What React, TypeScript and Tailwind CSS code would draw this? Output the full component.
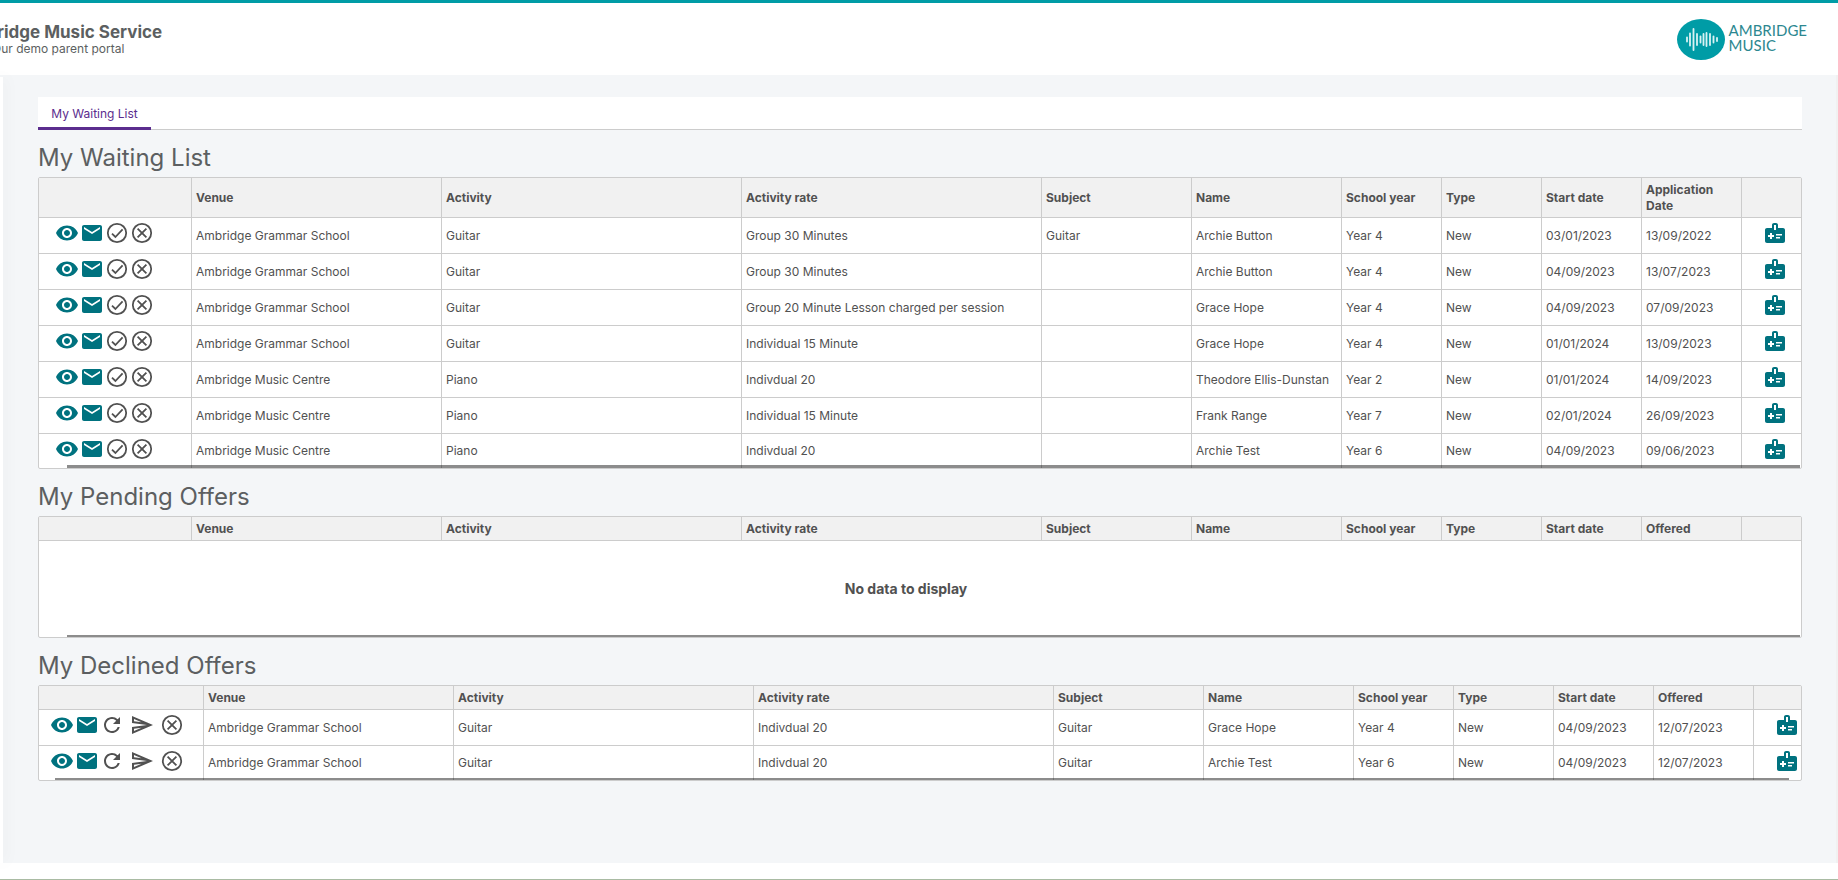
import type { ReactNode } from "react";
import { MdEmail, MdMedicalInformation, MdOutlineSend, MdRefresh, MdVisibility } from "react-icons/md";

type Entry = {
  venue: string;
  activity: string;
  rate: string;
  subject?: string;
  name: string;
  year: string;
  start: string;
  date: string;
};

const waiting: Entry[] = [
  { venue: "Ambridge Grammar School", activity: "Guitar", rate: "Group 30 Minutes", subject: "Guitar", name: "Archie Button", year: "Year 4", start: "03/01/2023", date: "13/09/2022" },
  { venue: "Ambridge Grammar School", activity: "Guitar", rate: "Group 30 Minutes", name: "Archie Button", year: "Year 4", start: "04/09/2023", date: "13/07/2023" },
  { venue: "Ambridge Grammar School", activity: "Guitar", rate: "Group 20 Minute Lesson charged per session", name: "Grace Hope", year: "Year 4", start: "04/09/2023", date: "07/09/2023" },
  { venue: "Ambridge Grammar School", activity: "Guitar", rate: "Individual 15 Minute", name: "Grace Hope", year: "Year 4", start: "01/01/2024", date: "13/09/2023" },
  { venue: "Ambridge Music Centre", activity: "Piano", rate: "Indivdual 20", name: "Theodore Ellis-Dunstan", year: "Year 2", start: "01/01/2024", date: "14/09/2023" },
  { venue: "Ambridge Music Centre", activity: "Piano", rate: "Individual 15 Minute", name: "Frank Range", year: "Year 7", start: "02/01/2024", date: "26/09/2023" },
  { venue: "Ambridge Music Centre", activity: "Piano", rate: "Indivdual 20", name: "Archie Test", year: "Year 6", start: "04/09/2023", date: "09/06/2023" },
];

const declined: Entry[] = [
  { venue: "Ambridge Grammar School", activity: "Guitar", rate: "Indivdual 20", subject: "Guitar", name: "Grace Hope", year: "Year 4", start: "04/09/2023", date: "12/07/2023" },
  { venue: "Ambridge Grammar School", activity: "Guitar", rate: "Indivdual 20", subject: "Guitar", name: "Archie Test", year: "Year 6", start: "04/09/2023", date: "12/07/2023" },
];

const teal = "text-[#00727f]";

// round outline icon, the glyph inside comes in as a path
function CircleIcon({ d }: { d: string }) {
  return (
    <svg width="24" height="24" viewBox="0 0 24 24" fill="none" stroke="currentColor" strokeWidth="1.8" aria-hidden="true">
      <circle cx="12" cy="12" r="9.2" />
      <path d={d} />
    </svg>
  );
}

const checkPath = "M7 12.6 10.4 16 17.6 8.4";
const crossPath = "M7.6 7.6 16.4 16.4M16.4 7.6 7.6 16.4";

function IconButton({ label, className, children }: { label: string; className?: string; children: ReactNode }) {
  return (
    <button type="button" aria-label={label} className={`block size-6 shrink-0 cursor-pointer ${className || ""}`}>
      {children}
    </button>
  );
}

function WaitingActions() {
  return (
    <div className="flex gap-px pl-4">
      <IconButton label="View" className={teal}><MdVisibility size={24} /></IconButton>
      <IconButton label="Email" className={teal}><MdEmail size={24} /></IconButton>
      <IconButton label="Accept"><CircleIcon d={checkPath} /></IconButton>
      <IconButton label="Withdraw"><CircleIcon d={crossPath} /></IconButton>
    </div>
  );
}

function DeclinedActions() {
  return (
    <div className="flex gap-1.5 pl-[11px]">
      <div className="flex gap-px">
        <IconButton label="View" className={teal}><MdVisibility size={24} /></IconButton>
        <IconButton label="Email" className={teal}><MdEmail size={24} /></IconButton>
        <IconButton label="Reinstate"><MdRefresh size={24} /></IconButton>
      </div>
      <IconButton label="Send"><MdOutlineSend size={24} /></IconButton>
      <IconButton label="Remove"><CircleIcon d={crossPath} /></IconButton>
    </div>
  );
}

type GridProps = {
  title: string;
  dateLabel: string;
  rows: Entry[];
  wide?: boolean;
  actions?: ReactNode;
  bar: string;
};

function OfferGrid({ title, dateLabel, rows, wide, actions, bar }: GridProps) {
  const labels = ["", "Venue", "Activity", "Activity rate", "Subject", "Name", "School year", "Type", "Start date", dateLabel, ""];
  const th = "border-b border-l border-[#ccc] px-1 pt-1 pb-[3px] text-left leading-4 font-bold first:border-l-0";
  const td = "border-b border-l border-[#ccc] px-1 whitespace-nowrap first:border-l-0 group-last:border-b-0";
  const iconCell = "border-b border-[#ccc] pt-[3px] align-top group-last:border-b-0";

  return (
    <section>
      <h2 className="pt-[11px] pb-[3px] text-2xl leading-[33px] text-[#5c5f61]">{title}</h2>
      <div className="relative overflow-hidden rounded-xs border border-[#ccc] bg-white">
        <table className="w-full table-fixed border-separate border-spacing-0">
          <colgroup>
            <col className={wide ? "w-[164px]" : "w-[152px]"} />
            <col className="w-[250px]" />
            <col className="w-[300px]" />
            <col className="w-[300px]" />
            <col className="w-[150px]" />
            <col className="w-[150px]" />
            <col className="w-[100px]" />
            <col className="w-[100px]" />
            <col className="w-[100px]" />
            <col className="w-[100px]" />
            <col />
          </colgroup>
          <thead className="bg-[#f1f1f1]">
            <tr>
              {labels.map((label, i) => (
                <th key={i} className={th}>{label}</th>
              ))}
            </tr>
          </thead>
          <tbody>
            {rows.map((r, i) => (
              <tr key={i} className="group h-9 last:h-[34px]">
                <td className={iconCell}>{actions}</td>
                <td className={td}>{r.venue}</td>
                <td className={td}>{r.activity}</td>
                <td className={td}>{r.rate}</td>
                <td className={td}>{r.subject}</td>
                <td className={td}>{r.name}</td>
                <td className={td}>{r.year}</td>
                <td className={td}>New</td>
                <td className={td}>{r.start}</td>
                <td className={td}>{r.date}</td>
                <td className={`${iconCell} border-l pl-[21px]`}>
                  <IconButton label="Medical information" className={teal}><MdMedicalInformation size={24} /></IconButton>
                </td>
              </tr>
            ))}
            {rows.length === 0 && (
              <tr>
                <td colSpan={11} className="h-24 pr-7 text-center text-sm font-bold">No data to display</td>
              </tr>
            )}
          </tbody>
        </table>
        {/* horizontal scroll thumb */}
        <div className={`absolute bottom-0 bg-black/45 ${bar}`} />
      </div>
    </section>
  );
}

function Logo() {
  const bars = [
    [10, 4], [13, 12], [16.5, 21], [20, 11], [23.5, 6], [26.5, 11], [29.5, 13], [33, 11], [36.5, 6], [40, 3],
  ];
  return (
    <a href="#" className="flex items-center gap-1 text-[#2c8790]">
      <svg width="48" height="41" viewBox="0 0 48 41" aria-hidden="true">
        <ellipse cx="24" cy="20.5" rx="24" ry="20.5" fill="#009ca6" />
        {bars.map(([x, h]) => (
          <line key={x} x1={x} x2={x} y1={20.5 - h / 2} y2={20.5 + h / 2} stroke="#d9f2f3" strokeWidth="1.8" strokeLinecap="round" />
        ))}
      </svg>
      <span className="pb-1 font-[Lato,sans-serif] text-[15px] leading-[15px]">
        AMBRIDGE
        <br />
        MUSIC
      </span>
    </a>
  );
}

export default function App() {
  return (
    <div className="flex min-h-screen flex-col border-b border-[#a9bba3] bg-white font-[Inter,sans-serif] text-xs text-[#515151]">
      <header className="flex h-[75px] items-start justify-between overflow-hidden border-t-[3px] border-[#009ca6] pr-[31px]">
        <div className="pt-5 whitespace-nowrap text-[#5c5f61]">
          <h1 className="-ml-[42px] text-[17px] leading-[18px] font-bold">Ambridge Music Service</h1>
          <p className="-ml-2 leading-4">Our demo parent portal</p>
        </div>
        <div className="pt-4">
          <Logo />
        </div>
      </header>

      <main className="mb-4 flex flex-1 border-r-2 border-[#f1f1f1] bg-[#f4f6f8]">
        <div className="mt-0.5 w-[3px] bg-white shadow-[0_0_16px_rgba(0,0,0,0.1)]" />
        <div className="min-w-0 flex-1 pt-[22px] pr-[34px] pl-[35px]">
          <nav className="flex border-b border-[#ccc] bg-white">
            <a href="#" className="-mb-px flex h-[33px] w-[113px] items-center justify-center border-b-[3px] border-[#5b2d8e] pt-[3px] whitespace-nowrap text-[#5b2d8e]">
              My Waiting List
            </a>
          </nav>
          <OfferGrid title="My Waiting List" dateLabel="Application Date" rows={waiting} actions={<WaitingActions />} bar="left-7 right-px h-[3px]" />
          <OfferGrid title="My Pending Offers" dateLabel="Offered" rows={[]} bar="left-7 right-px h-0.5" />
          <OfferGrid title="My Declined Offers" dateLabel="Offered" rows={declined} wide actions={<DeclinedActions />} bar="left-4 right-3 h-0.5" />
        </div>
      </main>
    </div>
  );
}
